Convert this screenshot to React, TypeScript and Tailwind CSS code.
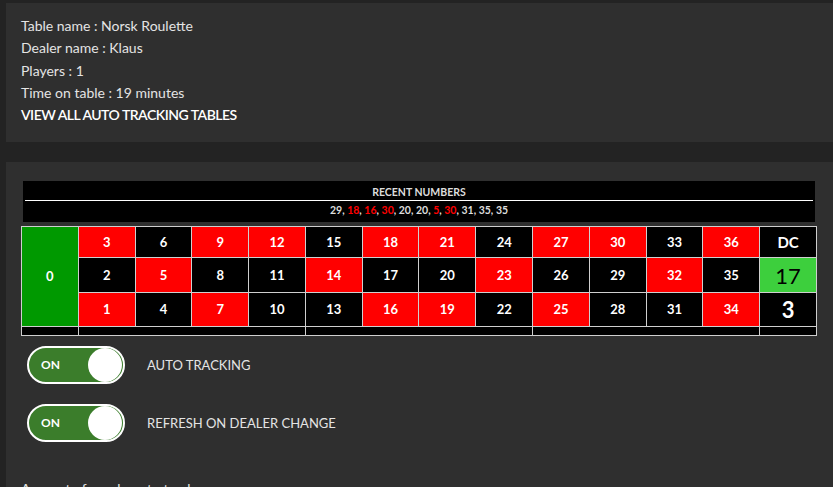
import React from "react";

const RED = new Set([1, 3, 5, 7, 9, 12, 14, 16, 18, 19, 21, 23, 25, 27, 30, 32, 34, 36]);

const rows = [
  [3, 6, 9, 12, 15, 18, 21, 24, 27, 30, 33, 36],
  [2, 5, 8, 11, 14, 17, 20, 23, 26, 29, 32, 35],
  [1, 4, 7, 10, 13, 16, 19, 22, 25, 28, 31, 34],
];

const recent = [29, 18, 16, 30, 20, 20, 5, 30, 31, 35, 35];

function Toggle({ label }: { label: string }) {
  return (
    <div className="flex items-center gap-[22px] ml-[6px]">
      <div className="w-[98px] h-[38px] rounded-full border-2 border-white bg-[#3b7d2b] flex items-center justify-between pl-[12px] pr-[1px]">
        <span className="text-white font-bold text-[12px]">ON</span>
        <div className="w-[34px] h-[34px] rounded-full bg-white" />
      </div>
      <span className="text-[#e4e4e4] text-[13px]">{label}</span>
    </div>
  );
}

export default function App() {
  return (
    <div
      className="w-[833px] h-[487px] overflow-hidden bg-[#232323] pt-[3px]"
      style={{ fontFamily: "Lato, 'Liberation Sans', sans-serif" }}
    >
      <div className="ml-[6px] bg-[#2f2f2f] pl-[15px] pt-[12px] pb-[16px] text-[14px] leading-[22.3px] text-[#e4e4e4]">
        <div>Table name : Norsk Roulette</div>
        <div>Dealer name : Klaus</div>
        <div>Players : 1</div>
        <div>Time on table : 19 minutes</div>
        <div className="text-white font-semibold tracking-[-0.5px]">VIEW ALL AUTO TRACKING TABLES</div>
      </div>

      <div className="ml-[6px] mt-[20px] bg-[#2f2f2f] pl-[15px] pr-[16px] pt-[19px] h-[400px]">
        <div className="mx-[2px] bg-black h-[41px] flex flex-col items-center pt-[4px]">
          <div className="text-[#dddddd] font-bold text-[10.5px] leading-[14px]">RECENT NUMBERS</div>
          <div className="self-stretch mx-[2px] h-px bg-white mt-[1px]" />
          <div className="text-[#dddddd] font-bold text-[10.5px] leading-[18px]">
            {recent.map((n, i) => (
              <span key={i}>
                <span className={RED.has(n) ? "text-[#ff0000]" : ""}>{n}</span>
                {i < recent.length - 1 ? ", " : ""}
              </span>
            ))}
          </div>
        </div>

        <div className="mt-[4px] grid grid-cols-14 grid-rows-[30px_34px_33px_8px] gap-px p-px bg-[#cfcfcf] text-white font-bold text-[13px]">
          <div className="row-span-3 bg-[#009900] flex items-center justify-center">0</div>
          {rows.map((r, ri) => (
            <React.Fragment key={ri}>
              {r.map((n) => (
                <div
                  key={n}
                  className={`flex items-center justify-center ${RED.has(n) ? "bg-[#ff0000]" : "bg-black"}`}
                >
                  {n}
                </div>
              ))}
              {ri === 0 && <div className="bg-black flex items-center justify-center text-[15px]">DC</div>}
              {ri === 1 && (
                <div className="bg-[#3dcf3d] flex items-center justify-center text-black font-normal text-[22px]">17</div>
              )}
              {ri === 2 && <div className="bg-black flex items-center justify-center text-[22px]">3</div>}
            </React.Fragment>
          ))}
          <div className="bg-black" />
          <div className="bg-black col-span-4" />
          <div className="bg-black col-span-4" />
          <div className="bg-black col-span-4" />
          <div className="bg-black" />
        </div>

        <div className="mt-[10px] flex flex-col gap-[20px]">
          <Toggle label="AUTO TRACKING" />
          <Toggle label="REFRESH ON DEALER CHANGE" />
        </div>

        <div className="mt-[36px] text-[#e4e4e4] text-[14px]">Amount of numbers to track</div>
      </div>
    </div>
  );
}
